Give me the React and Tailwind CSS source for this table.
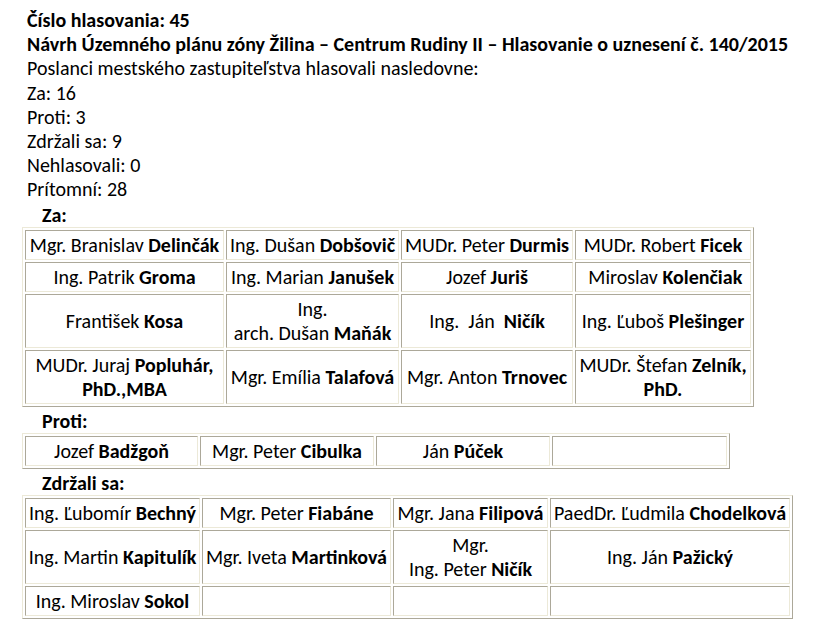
import React from "react";

// each name: [prefix, surname] or lines array for wrapped cells
const zaRows = [
  [["Mgr. Branislav ", "Delinčák"], ["Ing. Dušan ", "Dobšovič"], ["MUDr. Peter ", "Durmis"], ["MUDr. Robert ", "Ficek"]],
  [["Ing. Patrik ", "Groma"], ["Ing. Marian ", "Janušek"], ["Jozef ", "Juriš"], ["\u00a0Miroslav ", "Kolenčiak"]],
  [["František ", "Kosa"], ["Ing.", null, "arch. Dušan ", "Maňák"], ["Ing.\u00a0 Ján\u00a0 ", "Ničík"], ["Ing. Ľuboš ", "Plešinger"]],
  [["MUDr. Juraj ", "Popluhár,", "", "PhD.,MBA"], ["Mgr. Emília ", "Talafová"], ["Mgr. Anton ", "Trnovec"], ["MUDr. Štefan ", "Zelník,", "", "PhD."]],
];

const protiRows = [[["Jozef ", "Badžgoň"], ["Mgr. Peter ", "Cibulka"], ["Ján ", "Púček"], null]];

const zdrzaliRows = [
  [["Ing. Ľubomír ", "Bechný"], ["Mgr. Peter ", "Fiabáne"], ["Mgr. Jana ", "Filipová"], ["PaedDr. Ľudmila ", "Chodelková"]],
  [["Ing. Martin ", "Kapitulík"], ["Mgr. Iveta ", "Martinková"], ["Mgr.", null, "Ing. Peter ", "Ničík"], ["Ing. Ján ", "Pažický"]],
  [["Ing. Miroslav ", "Sokol"], null, null, null],
];

function Name({ parts }) {
  if (!parts) return null;
  const [a, b, c, d] = parts;
  return (
    <>
      {a}
      {b && <b>{b}</b>}
      {parts.length > 2 && <br />}
      {c}
      {d && <b>{d}</b>}
    </>
  );
}

function VoteTable({ rows, widths, tableWidth }) {
  return (
    <table
      className="table-fixed border-separate border-spacing-[2px] border border-t-[#ece9d8] border-l-[#ece9d8] border-b-[#aca899] border-r-[#aca899]"
      style={{ width: tableWidth }}
    >
      <tbody>
        {rows.map((row, ri) => (
          <tr key={ri}>
            {row.map((cell, ci) => (
              <td
                key={ci}
                className="border border-t-[#aca899] border-l-[#aca899] border-b-[#ece9d8] border-r-[#ece9d8] p-[2px] text-center align-middle whitespace-nowrap leading-[24px] h-[30px]"
                style={ri === 0 ? { width: widths[ci] } : undefined}
              >
                <Name parts={cell} />
              </td>
            ))}
          </tr>
        ))}
      </tbody>
    </table>
  );
}

export default function App() {
  return (
    <div className="bg-white min-h-screen pt-[8px] pl-[22px] text-black text-[20px] font-[Carlito,Lato,sans-serif]">
      <div className="pl-[5px] leading-[24.2px]">
        <div className="font-bold">Číslo hlasovania: 45</div>
        <div className="font-bold">
          Návrh Územného plánu zóny Žilina – Centrum Rudiny II – Hlasovanie o uznesení č. 140/2015
        </div>
        <div>Poslanci mestského zastupiteľstva hlasovali nasledovne:</div>
        <div>Za: 16</div>
        <div>Proti: 3</div>
        <div>Zdržali sa: 9</div>
        <div>Nehlasovali: 0</div>
        <div>Prítomní: 28</div>
      </div>

      <div className="pl-[20px] pt-[1px] font-bold leading-[24px]">Za:</div>
      <VoteTable rows={zaRows} widths={[199, 173, 172, 176]} tableWidth={732} />

      <div className="pl-[20px] pt-[2px] font-bold leading-[24px]">Proti:</div>
      <VoteTable rows={protiRows} widths={[173, 174, 174, 175]} tableWidth={708} />

      <div className="pl-[20px] pt-[2px] font-bold leading-[24px]">Zdržali sa:</div>
      <VoteTable rows={zdrzaliRows} widths={[175, 189, 155, 240]} tableWidth={771} />
    </div>
  );
}
